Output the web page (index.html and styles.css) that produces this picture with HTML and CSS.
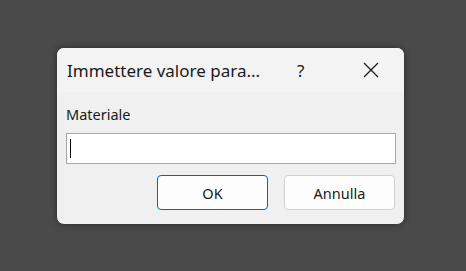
FILE: index.html
```html
<!DOCTYPE html>
<html lang="it">
<head>
    <meta charset="UTF-8">
    <meta name="viewport" content="width=device-width, initial-scale=1.0">
    <title>Immettere valore</title>
    <link rel="stylesheet" href="styles.css">
</head>
<body>
    <div class="dialog">
        <div class="title-bar">
            <span class="title">Immettere valore para...</span>
            <span class="help">?</span>
            <span class="close">
                <svg width="16" height="16" viewBox="0 0 16 16">
                    <path d="M1 1 L15 15 M15 1 L1 15" stroke="#1a1a1a" stroke-width="1.3" fill="none"/>
                </svg>
            </span>
        </div>
        <div class="content">
            <label for="valueInput" class="field-label">Materiale</label>
            <div class="input-box" id="valueInput"><span class="caret"></span></div>
            <div class="buttons">
                <button class="btn btn-default">OK</button>
                <button class="btn">Annulla</button>
            </div>
        </div>
    </div>
</body>
</html>
```

FILE: styles.css
```css
body {
    margin: 0;
    background-color: #4a4a4a;
    font-family: 'Noto Sans', 'Open Sans', sans-serif;
    color: #1a1a1a;
    height: 271px;
    overflow: hidden;
}
.dialog {
    margin: 47px 0 0 56px;
    width: 347px;
    height: 176px;
    background-color: #f0f0f0;
    border: 1px solid #3a3a3a;
    border-radius: 8px;
    box-shadow: 0 0 6px rgba(0,0,0,0.35);
    overflow: hidden;
}
.title-bar {
    display: flex;
    align-items: center;
    height: 44px;
    background-color: #f3f3f3;
    padding-left: 10px;
}
.title {
    font-size: 17px;
    width: 230px;
}
.help {
    font-size: 17px;
    width: 66px;
}
.close {
    display: flex;
    align-items: center;
}
.content {
    padding: 12px 8px 0 9px;
}
.field-label {
    display: block;
    font-size: 14.5px;
    line-height: 20px;
    margin-bottom: 9px;
}
.input-box {
    height: 29px;
    width: 325px;
    background-color: #fff;
    border: 1px solid #a8a8a8;
    display: flex;
    align-items: center;
    padding-left: 3px;
    box-sizing: content-box;
}
.caret {
    width: 1px;
    height: 19px;
    background-color: #000;
}
.buttons {
    display: flex;
    justify-content: flex-end;
    gap: 16px;
    margin-top: 11px;
    padding-right: 1px;
}
.btn {
    width: 111px;
    height: 35px;
    background-color: #fdfdfd;
    border: 1px solid #d0d0d0;
    border-radius: 4px;
    font-family: inherit;
    font-size: 14.5px;
    color: #1a1a1a;
    padding: 0;
}
.btn-default {
    border-color: #0067c0;
}
```
